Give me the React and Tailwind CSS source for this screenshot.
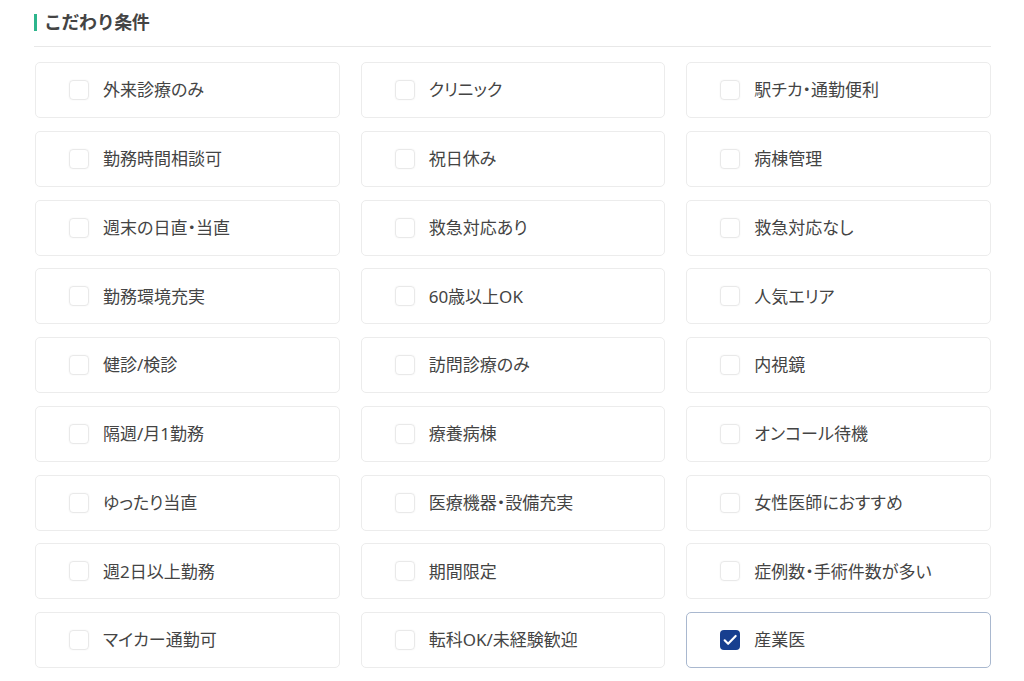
import React, { useState } from 'react';

const items = [
  '外来診療のみ', 'クリニック', '駅チカ・通勤便利',
  '勤務時間相談可', '祝日休み', '病棟管理',
  '週末の日直・当直', '救急対応あり', '救急対応なし',
  '勤務環境充実', '60歳以上OK', '人気エリア',
  '健診/検診', '訪問診療のみ', '内視鏡',
  '隔週/月1勤務', '療養病棟', 'オンコール待機',
  'ゆったり当直', '医療機器・設備充実', '女性医師におすすめ',
  '週2日以上勤務', '期間限定', '症例数・手術件数が多い',
  'マイカー通勤可', '転科OK/未経験歓迎', '産業医',
];

const App = () => {
  const [checked, setChecked] = useState(['産業医']);

  const toggle = (label) => {
    setChecked((prev) =>
      prev.includes(label) ? prev.filter((l) => l !== label) : [...prev, label]
    );
  };

  return (
    <div
      className="min-h-screen bg-white"
      style={{ fontFamily: '"Noto Sans", "Noto Sans CJK JP", sans-serif' }}
    >
      <div className="w-[957px] ml-[34px] pt-[10px]">
        {/* Heading */}
        <div className="flex items-center h-[24px]">
          <span className="w-[3px] h-[17px] bg-[#2db58c] mr-[7px]" />
          <h2 className="text-[18px] font-bold text-[#444] leading-none tracking-tight">
            こだわり条件
          </h2>
        </div>
        <div className="mt-[12px] border-t border-[#e8e8e8]" />

        {/* Options */}
        <div className="grid grid-cols-3 gap-x-[21px] gap-y-[12.75px] mt-[15px] pl-[1px]">
          {items.map((label) => {
            const on = checked.includes(label);
            return (
              <button
                key={label}
                onClick={() => toggle(label)}
                className={`h-[56px] flex items-center pl-[33px] rounded-[5px] border bg-white text-left ${
                  on ? 'border-[#a9b8cf]' : 'border-[#ececec]'
                }`}
              >
                <span
                  className={`w-[20px] h-[20px] rounded-[4px] flex items-center justify-center mr-[14px] ${
                    on
                      ? 'bg-[#173f8f]'
                      : 'border border-[#e9e9e9] shadow-[0_0_2px_rgba(0,0,0,0.06)]'
                  }`}
                >
                  {on && (
                    <svg width="16" height="16" viewBox="0 0 24 24" fill="none">
                      <path
                        d="M4 12.5l5.2 5.2L20.5 6"
                        stroke="white"
                        strokeWidth="3.2"
                        strokeLinecap="round"
                        strokeLinejoin="round"
                      />
                    </svg>
                  )}
                </span>
                <span className="text-[17px] text-[#444] [font-feature-settings:'palt']">
                  {label}
                </span>
              </button>
            );
          })}
        </div>
      </div>
    </div>
  );
};

export default App;
